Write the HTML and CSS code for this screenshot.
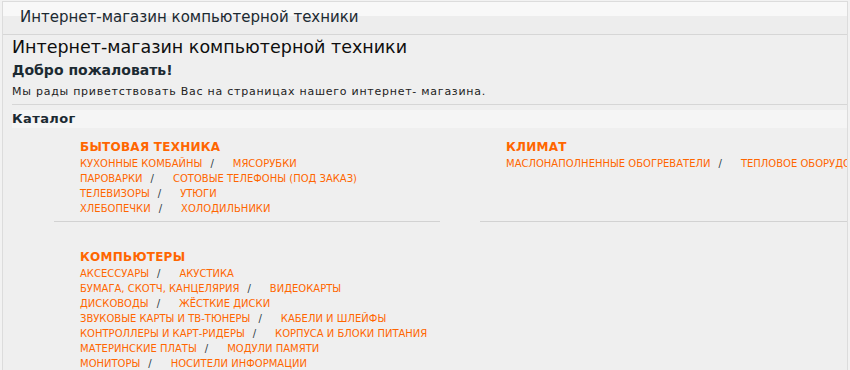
FILE: index.html
```html
<!DOCTYPE html>
<html lang="ru">
<head>
<meta charset="utf-8">
<title>Интернет-магазин компьютерной техники</title>
<link rel="stylesheet" href="styles.css">
</head>
<body>
<div class="page">
  <div class="topbar">Интернет-магазин компьютерной техники</div>
  <div class="content">
    <h1 class="site-title">Интернет-магазин компьютерной техники</h1>
    <h2 class="welcome">Добро пожаловать!</h2>
    <p class="intro">Мы рады приветствовать Вас на страницах нашего интернет- магазина.</p>
    <div class="section-title">Каталог</div>
    <div class="catalog">
      <div class="cat">
        <a class="cat-title" href="#">БЫТОВАЯ ТЕХНИКА</a>
        <div class="row"><a href="#">КУХОННЫЕ КОМБАЙНЫ</a><span class="sep">/</span><a href="#">МЯСОРУБКИ</a></div>
        <div class="row"><a href="#">ПАРОВАРКИ</a><span class="sep">/</span><a href="#">СОТОВЫЕ ТЕЛЕФОНЫ (ПОД ЗАКАЗ)</a></div>
        <div class="row"><a href="#">ТЕЛЕВИЗОРЫ</a><span class="sep">/</span><a href="#">УТЮГИ</a></div>
        <div class="row"><a href="#">ХЛЕБОПЕЧКИ</a><span class="sep">/</span><a href="#">ХОЛОДИЛЬНИКИ</a></div>
        <div class="cat-rule"></div>
      </div>
      <div class="cat">
        <a class="cat-title" href="#">КЛИМАТ</a>
        <div class="row"><a href="#">МАСЛОНАПОЛНЕННЫЕ ОБОГРЕВАТЕЛИ</a><span class="sep">/</span><a href="#">ТЕПЛОВОЕ ОБОРУДОВАНИЕ</a></div>
        <div class="cat-rule"></div>
      </div>
      <div class="cat">
        <a class="cat-title" href="#">КОМПЬЮТЕРЫ</a>
        <div class="row"><a href="#">АКСЕССУАРЫ</a><span class="sep">/</span><a href="#">АКУСТИКА</a></div>
        <div class="row"><a href="#">БУМАГА, СКОТЧ, КАНЦЕЛЯРИЯ</a><span class="sep">/</span><a href="#">ВИДЕОКАРТЫ</a></div>
        <div class="row"><a href="#">ДИСКОВОДЫ</a><span class="sep">/</span><a href="#">ЖЁСТКИЕ ДИСКИ</a></div>
        <div class="row"><a href="#">ЗВУКОВЫЕ КАРТЫ И ТВ-ТЮНЕРЫ</a><span class="sep">/</span><a href="#">КАБЕЛИ И ШЛЕЙФЫ</a></div>
        <div class="row"><a href="#">КОНТРОЛЛЕРЫ И КАРТ-РИДЕРЫ</a><span class="sep">/</span><a href="#">КОРПУСА И БЛОКИ ПИТАНИЯ</a></div>
        <div class="row"><a href="#">МАТЕРИНСКИЕ ПЛАТЫ</a><span class="sep">/</span><a href="#">МОДУЛИ ПАМЯТИ</a></div>
        <div class="row"><a href="#">МОНИТОРЫ</a><span class="sep">/</span><a href="#">НОСИТЕЛИ ИНФОРМАЦИИ</a></div>
      </div>
      <div class="cat"></div>
    </div>
  </div>
</div>
</body>
</html>
```

FILE: styles.css
```css
html, body {
  margin: 0;
  padding: 0;
  background: #f2f2f2;
  font-family: "DejaVu Sans", Verdana, sans-serif;
  overflow: hidden;
}

.page {
  margin: 1px 0 0 2px;
  width: 844px;
  height: 380px;
  border: 1px solid #dcdcdc;
  background: #efefef;
  overflow: hidden;
}

.topbar {
  height: 32px;
  line-height: 30px;
  padding-left: 17px;
  font-size: 15px;
  color: #1c2a32;
  background: linear-gradient(#f8f8f8 0, #f8f8f8 14px, #ededed 14px, #ededed 100%);
  border-bottom: 1px solid #d6d6d6;
}

.content {
  padding-left: 9px;
}

.site-title {
  margin: 1px 0 0;
  font-size: 17.5px;
  line-height: 22px;
  font-weight: normal;
  color: #0e0e0e;
}

.welcome {
  margin: 3px 0 0;
  font-size: 14px;
  line-height: 18px;
  font-weight: bold;
  color: #1c2a32;
}

.intro {
  margin: 6px 0 0;
  padding-bottom: 5px;
  font-size: 11px;
  line-height: 14px;
  letter-spacing: 0.75px;
  color: #222;
  border-bottom: 1px solid #d6d6d6;
}

.section-title {
  margin-top: 5px;
  font-size: 13px;
  line-height: 18px;
  letter-spacing: 0.4px;
  font-weight: bold;
  color: #1c2a32;
  background: #f5f5f5;
}

.catalog {
  margin-left: 42px;
  padding-top: 11px;
  display: grid;
  grid-template-columns: 426px 426px;
  row-gap: 27px;
}

.cat {
  display: flex;
  flex-direction: column;
  padding-left: 26px;
}

.cat-title {
  font-size: 12px;
  line-height: 17px;
  letter-spacing: 0.25px;
  font-weight: bold;
  color: #ff6600;
  text-decoration: none;
  align-self: flex-start;
}

.row {
  font-size: 10px;
  line-height: 15px;
  white-space: nowrap;
}

.row a {
  color: #ff6600;
  text-decoration: none;
}

.sep {
  color: #2a3a42;
  margin: 0 19px 0 8px;
}

.cat-rule {
  margin: auto 40px 0 -26px;
  padding-top: 5px;
  border-bottom: 1px solid #d2d2d2;
}
```
